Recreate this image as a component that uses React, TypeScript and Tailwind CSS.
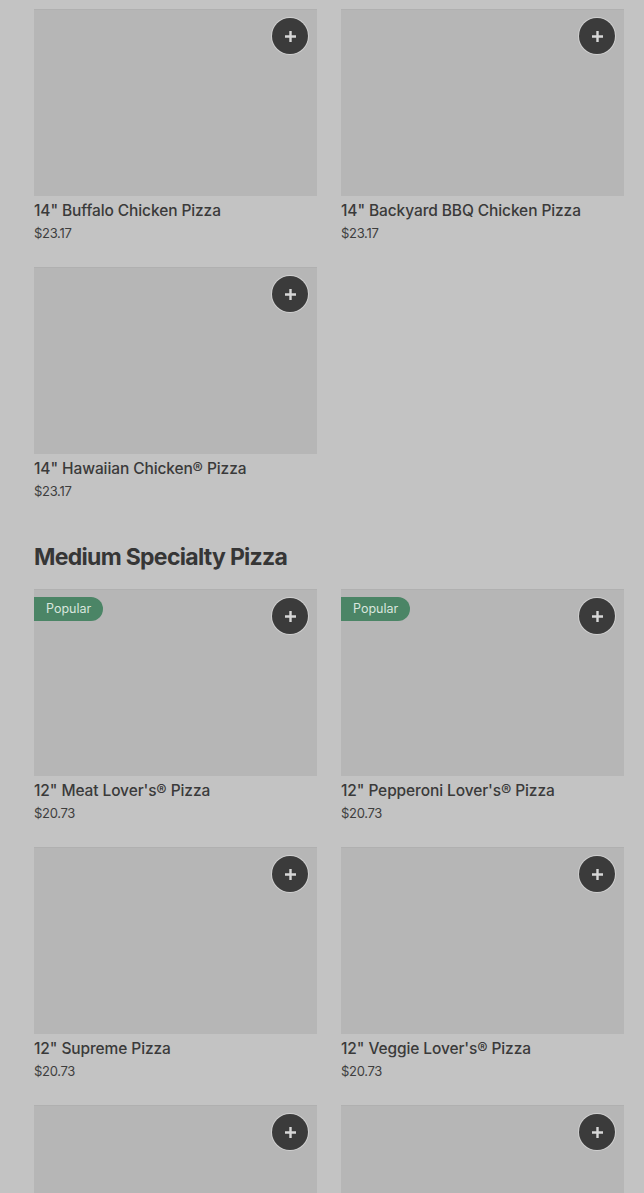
import React from "react";

type Item = { name: string; price: string; popular?: boolean };

const large: Item[] = [
  { name: "14\" Buffalo Chicken Pizza", price: "$23.17" },
  { name: "14\" Backyard BBQ Chicken Pizza", price: "$23.17" },
  { name: "14\" Hawaiian Chicken® Pizza", price: "$23.17" },
];

const medium: Item[] = [
  { name: "12\" Meat Lover's® Pizza", price: "$20.73", popular: true },
  { name: "12\" Pepperoni Lover's® Pizza", price: "$20.73", popular: true },
  { name: "12\" Supreme Pizza", price: "$20.73" },
  { name: "12\" Veggie Lover's® Pizza", price: "$20.73" },
  { name: "12\" Chicken Bacon Parmesan Pizza", price: "$20.73" },
  { name: "12\" Ultimate Cheese Lover's® Pizza", price: "$20.73" },
];

function PlusButton() {
  return (
    <button className="absolute top-[9px] right-[9px] w-9 h-9 rounded-full bg-[#3b3b3b] ring-1 ring-[#d0d0d0] flex items-center justify-center">
      <svg width="13" height="13" viewBox="0 0 13 13">
        <path d="M6.5 1v11M1 6.5h11" stroke="#d8d8d8" strokeWidth="2.4" />
      </svg>
    </button>
  );
}

function Card({ item }: { item: Item }) {
  return (
    <div className="flex flex-col">
      <div className="relative h-[187px] bg-[#b6b6b6] shadow-[inset_0_1px_0_#b0b0b0]">
        {item.popular && (
          <span className="absolute left-0 top-2 h-6 pl-3 pr-3 rounded-r-full bg-[#4b8566] text-[#d9e6de] text-[12.5px] flex items-center">
            Popular
          </span>
        )}
        <PlusButton />
      </div>
      <div className="mt-[4px] text-[15.5px] leading-[22px] font-medium text-[#3a3a3a] truncate tracking-[-0.1px]">
        {item.name}
      </div>
      <div className="mt-[2px] text-[13px] leading-[18px] text-[#3e3e3e] tracking-[-0.3px]">
        {item.price}
      </div>
    </div>
  );
}

export default function App() {
  return (
    <div
      className="min-h-screen bg-[#c3c3c3] pl-[34px] pr-[20px] pt-[9px] pb-10"
      style={{ fontFamily: "Inter, 'Noto Sans', sans-serif" }}
    >
      <div className="grid grid-cols-2 gap-x-6 gap-y-[25px]">
        {large.map((it, i) => (
          <Card key={i} item={it} />
        ))}
      </div>
      <h2 className="mt-[42px] mb-[17px] text-[23px] leading-[30px] font-bold tracking-[-0.7px] text-[#363636]">
        Medium Specialty Pizza
      </h2>
      <div className="grid grid-cols-2 gap-x-6 gap-y-[25px]">
        {medium.map((it, i) => (
          <Card key={i} item={it} />
        ))}
      </div>
    </div>
  );
}
